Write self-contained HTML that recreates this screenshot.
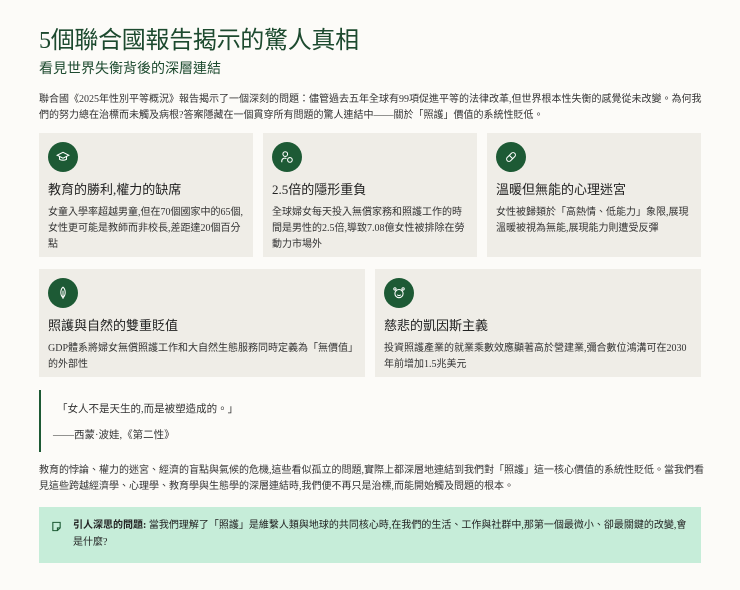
<!DOCTYPE html>
<html><head><meta charset="utf-8"><style>
*{margin:0;padding:0;box-sizing:border-box}
body{width:740px;height:590px;background:#fcfbf8;font-family:"Liberation Serif","Noto Sans CJK TC",sans-serif;color:#2b2b2b;position:relative;overflow:hidden}
.a{position:absolute}
h1{position:absolute;left:39px;top:25px;font-size:24px;font-weight:400;color:#1d4a2f;letter-spacing:-0.3px;line-height:32px}
h2{position:absolute;left:39px;top:60px;font-size:14px;font-weight:400;color:#1d4a2f;line-height:20px}
.p{position:absolute;left:39px;width:670px;font-size:10px;line-height:16px;color:#333}
.card{position:absolute;background:#efede7;padding:9px 6px 9px 9px}
.ic{width:30px;height:30px;border-radius:50%;background:#1d5a35;display:flex;align-items:center;justify-content:center}
.card h3{font-size:13px;font-weight:400;color:#222;margin-top:9px;line-height:18px}
.card p{font-size:10px;line-height:16px;color:#333;margin-top:6px}
.q{position:absolute;left:39px;top:390px;height:62px;border-left:2px solid #1d5a35;font-size:10.5px;color:#333}
.box{position:absolute;left:39px;top:507px;width:662px;height:56px;background:#c6edd9;padding:10px 6px 0 34px;font-size:10px;line-height:17px;color:#222}
</style></head><body>
<h1>5個聯合國報告揭示的驚人真相</h1>
<h2>看見世界失衡背後的深層連結</h2>
<div class="p" style="top:92px">聯合國《2025年性別平等概況》報告揭示了一個深刻的問題：儘管過去五年全球有99項促進平等的法律改革,但世界根本性失衡的感覺從未改變。為何我們的努力總在治標而未觸及病根?答案隱藏在一個貫穿所有問題的驚人連結中——關於「照護」價值的系統性貶低。</div>

<div class="card" style="left:39px;top:133px;width:214px;height:124px"><div class="ic"><svg width="14" height="14" viewBox="0 0 24 24" fill="none" stroke="#fff" stroke-width="1.8"><path d="M2 9l10-5 10 5-10 5z"/><path d="M6 11v5c3 2 9 2 12 0v-5"/></svg></div><h3>教育的勝利,權力的缺席</h3><p>女童入學率超越男童,但在70個國家中的65個,女性更可能是教師而非校長,差距達20個百分點</p></div>
<div class="card" style="left:263px;top:133px;width:214px;height:124px"><div class="ic"><svg width="14" height="14" viewBox="0 0 24 24" fill="none" stroke="#fff" stroke-width="1.8"><circle cx="9" cy="7" r="4"/><path d="M3 21v-2a5 5 0 0 1 8-4"/><circle cx="17" cy="17" r="4"/></svg></div><h3>2.5倍的隱形重負</h3><p>全球婦女每天投入無償家務和照護工作的時間是男性的2.5倍,導致7.08億女性被排除在勞動力市場外</p></div>
<div class="card" style="left:487px;top:133px;width:214px;height:124px"><div class="ic"><svg width="14" height="14" viewBox="0 0 24 24" fill="none" stroke="#fff" stroke-width="1.8"><rect x="3" y="8" width="18" height="8" rx="4" transform="rotate(-45 12 12)"/><path d="M9 9l6 6"/></svg></div><h3>溫暖但無能的心理迷宮</h3><p>女性被歸類於「高熱情、低能力」象限,展現溫暖被視為無能,展現能力則遭受反彈</p></div>
<div class="card" style="left:39px;top:269px;width:326px;height:108px"><div class="ic"><svg width="14" height="14" viewBox="0 0 24 24" fill="none" stroke="#fff" stroke-width="1.8"><path d="M12 2c5 4 5 14 0 18c-5-4-5-14 0-18z"/><path d="M12 8v14"/></svg></div><h3>照護與自然的雙重貶值</h3><p>GDP體系將婦女無償照護工作和大自然生態服務同時定義為「無價值」的外部性</p></div>
<div class="card" style="left:375px;top:269px;width:326px;height:108px"><div class="ic"><svg width="14" height="14" viewBox="0 0 24 24" fill="none" stroke="#fff" stroke-width="1.8"><circle cx="12" cy="13" r="7"/><circle cx="5" cy="5" r="2"/><circle cx="19" cy="5" r="2"/><path d="M9 15c2 2 4 2 6 0"/></svg></div><h3>慈悲的凱因斯主義</h3><p>投資照護產業的就業乘數效應顯著高於營建業,彌合數位鴻溝可在2030年前增加1.5兆美元</p></div>

<div class="q"><div style="position:absolute;left:16px;top:11px;white-space:nowrap">「女人不是天生的,而是被塑造成的。」</div><div style="position:absolute;left:12px;top:37px;white-space:nowrap">——西蒙·波娃,《第二性》</div></div>
<div class="p" style="top:463px">教育的悖論、權力的迷宮、經濟的盲點與氣候的危機,這些看似孤立的問題,實際上都深層地連結到我們對「照護」這一核心價值的系統性貶低。當我們看見這些跨越經濟學、心理學、教育學與生態學的深層連結時,我們便不再只是治標,而能開始觸及問題的根本。</div>
<div class="box"><svg class="a" style="left:12px;top:14px" width="11" height="11" viewBox="0 0 24 24" fill="none" stroke="#1d5a35" stroke-width="2.4"><path d="M4 3h16v12l-6 6H4z"/><path d="M14 21v-6h6"/></svg><b>引人深思的問題:</b> 當我們理解了「照護」是維繫人類與地球的共同核心時,在我們的生活、工作與社群中,那第一個最微小、卻最關鍵的改變,會是什麼?</div>
</body></html>
